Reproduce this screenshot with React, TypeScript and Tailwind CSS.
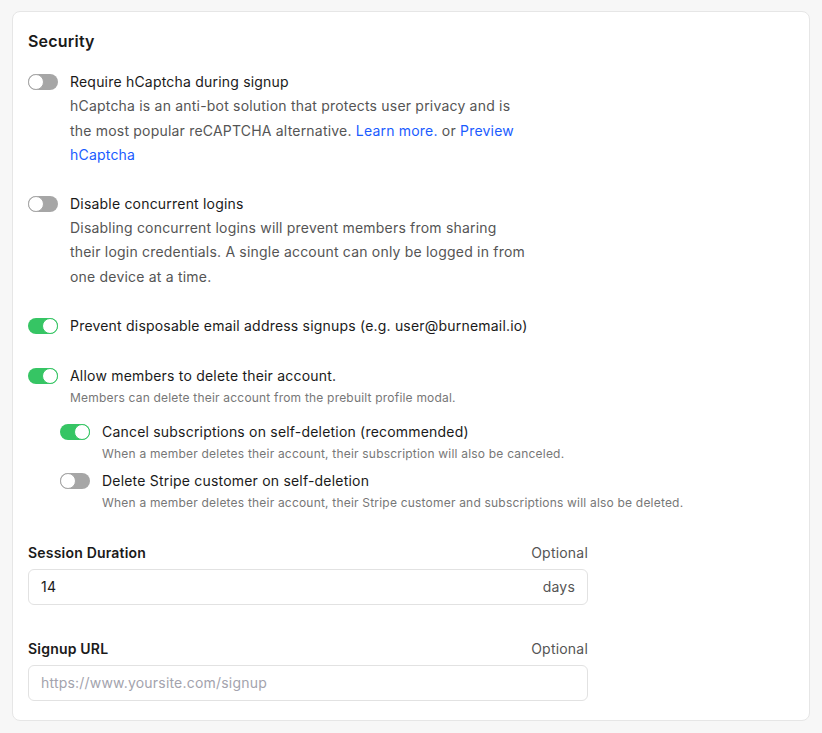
import React, { useState } from "react";

function Toggle({ on, onClick }: { on: boolean; onClick: () => void }) {
  return (
    <button
      onClick={onClick}
      className={`relative mt-1 h-4 w-[30px] shrink-0 rounded-full ${
        on ? "bg-[#36c564]" : "bg-[#a6a6a6]"
      }`}
    >
      <span
        className={`absolute top-0 h-4 w-4 rounded-full border bg-white ${
          on ? "left-[14px] border-[#36c564]" : "left-0 border-[#a6a6a6]"
        }`}
      />
    </button>
  );
}

export default function App() {
  const [captcha, setCaptcha] = useState(false);
  const [concurrent, setConcurrent] = useState(false);
  const [disposable, setDisposable] = useState(true);
  const [allowDelete, setAllowDelete] = useState(true);
  const [cancelSubs, setCancelSubs] = useState(true);
  const [deleteStripe, setDeleteStripe] = useState(false);

  return (
    <div
      className="min-h-screen bg-[#f7f7f7] px-3 pt-[11px] pb-3 tracking-[0.2px]"
      style={{ fontFamily: "Inter, 'Noto Sans', sans-serif" }}
    >
      <div className="rounded-lg border border-[#e6e6e6] bg-white px-[15px] pt-[17px] pb-[19px] text-[#1a1a1a]">
        {/* Heading */}
        <h2 className="text-base leading-6 font-semibold">Security</h2>

        {/* Toggles */}
        <div className="mt-[17px] flex flex-col text-sm">
          <div className="flex gap-3">
            <Toggle on={captcha} onClick={() => setCaptcha(!captcha)} />
            <div className="max-w-[457px]">
              <div className="leading-6">Require hCaptcha during signup</div>
              <p className="leading-[24.5px] text-[#555]">
                hCaptcha is an anti-bot solution that protects user privacy and is the
                most popular reCAPTCHA alternative.{" "}
                <a className="text-[#1a5cff]">Learn more.</a> or{" "}
                <a className="text-[#1a5cff]">Preview hCaptcha</a>
              </p>
            </div>
          </div>

          <div className="mt-[24px] flex gap-3">
            <Toggle on={concurrent} onClick={() => setConcurrent(!concurrent)} />
            <div className="max-w-[457px]">
              <div className="leading-6">Disable concurrent logins</div>
              <p className="leading-[24.5px] text-[#555]">
                Disabling concurrent logins will prevent members from sharing their
                login credentials. A single account can only be logged in from one
                device at a time.
              </p>
            </div>
          </div>

          <div className="mt-[25px] flex gap-3">
            <Toggle on={disposable} onClick={() => setDisposable(!disposable)} />
            <div className="leading-6">
              Prevent disposable email address signups (e.g. user@burnemail.io)
            </div>
          </div>

          <div className="mt-[26px]">
            <div className="flex gap-3">
              <Toggle on={allowDelete} onClick={() => setAllowDelete(!allowDelete)} />
              <div>
                <div className="leading-6">Allow members to delete their account.</div>
                <p className="text-xs leading-5 text-[#777]">
                  Members can delete their account from the prebuilt profile modal.
                </p>
              </div>
            </div>

            <div className="mt-3 ml-8 flex flex-col gap-[5px]">
              <div className="flex gap-3">
                <Toggle on={cancelSubs} onClick={() => setCancelSubs(!cancelSubs)} />
                <div>
                  <div className="leading-6">
                    Cancel subscriptions on self-deletion (recommended)
                  </div>
                  <p className="text-xs leading-5 text-[#777]">
                    When a member deletes their account, their subscription will also
                    be canceled.
                  </p>
                </div>
              </div>
              <div className="flex gap-3">
                <Toggle on={deleteStripe} onClick={() => setDeleteStripe(!deleteStripe)} />
                <div>
                  <div className="leading-6">Delete Stripe customer on self-deletion</div>
                  <p className="text-xs leading-5 text-[#777]">
                    When a member deletes their account, their Stripe customer and
                    subscriptions will also be deleted.
                  </p>
                </div>
              </div>
            </div>
          </div>
        </div>

        {/* Fields */}
        <div className="mt-[30px] w-[560px] text-sm">
          <div className="flex items-center justify-between leading-5">
            <span className="font-semibold">Session Duration</span>
            <span className="text-[#555]">Optional</span>
          </div>
          <div className="mt-1.5 flex h-9 items-center rounded-md border border-[#e2e2e2] px-3">
            <input
              defaultValue="14"
              className="flex-1 bg-transparent text-[#1a1a1a] outline-none"
            />
            <span className="text-[#555]">days</span>
          </div>

          <div className="mt-[34px] flex items-center justify-between leading-5">
            <span className="font-semibold">Signup URL</span>
            <span className="text-[#555]">Optional</span>
          </div>
          <div className="mt-1.5 flex h-9 items-center rounded-md border border-[#e2e2e2] px-3">
            <input
              placeholder="https://www.yoursite.com/signup"
              className="flex-1 bg-transparent outline-none placeholder:text-[#a3a3ad]"
            />
          </div>
        </div>
      </div>
    </div>
  );
}
